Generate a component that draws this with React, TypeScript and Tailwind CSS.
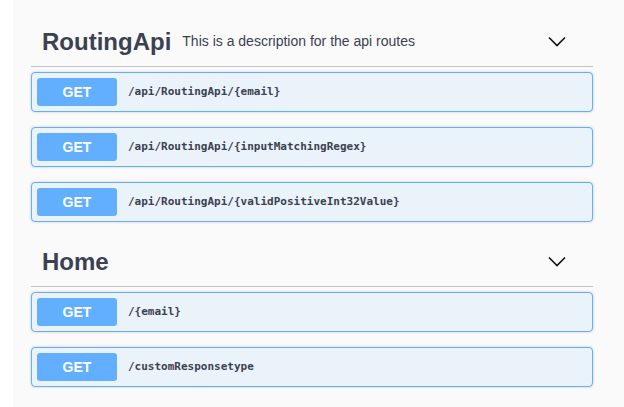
const sections = [
  {
    name: "RoutingApi",
    description: "This is a description for the api routes",
    ops: [
      "/api/RoutingApi/{email}",
      "/api/RoutingApi/{inputMatchingRegex}",
      "/api/RoutingApi/{validPositiveInt32Value}",
    ],
  },
  {
    name: "Home",
    description: "",
    ops: ["/{email}", "/customResponsetype"],
  },
];

function Chevron() {
  return (
    <svg width="20" height="20" viewBox="0 0 20 20" fill="none">
      <path d="M2 5.5 L10 13.5 L18 5.5" stroke="#111" strokeWidth="1.6" />
    </svg>
  );
}

export default function App() {
  return (
    <div className="min-h-[407px] bg-white pl-[13px] font-['Liberation_Sans',Arial,sans-serif] text-[#3b4151]">
      <div className="min-h-[407px] bg-[#fafafa] pl-[18px] pr-[31px] pt-[17px]">
        {sections.map((s) => (
          <section key={s.name}>
            <div className="flex h-[50px] items-center border-b border-[#c1c3c7] pl-[11px] pr-[26px]">
              <h3 className="text-[24px] font-bold leading-normal">{s.name}</h3>
              {s.description && (
                <span className="pl-[11px] text-[14px] leading-normal">{s.description}</span>
              )}
              <div className="ml-auto flex">
                <Chevron />
              </div>
            </div>
            <div className="pt-[5px]">
              {s.ops.map((p) => (
                <div
                  key={p}
                  className="mb-[15px] flex h-[40px] items-center rounded-[4px] border border-[#61affe] bg-[#ebf3fa] p-[5px] shadow-[0_0_3px_rgba(0,0,0,0.19)]"
                >
                  <span className="flex h-[28px] w-[80px] items-center justify-center rounded-[3px] bg-[#61affe] text-[14px] font-bold text-white">
                    GET
                  </span>
                  <span className="pl-[11px] font-['DejaVu_Sans_Mono',monospace] text-[11px] font-semibold text-[#3b4151]">
                    {p}
                  </span>
                </div>
              ))}
            </div>
          </section>
        ))}
      </div>
    </div>
  );
}
